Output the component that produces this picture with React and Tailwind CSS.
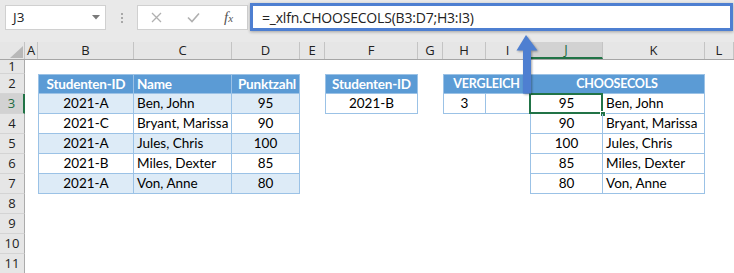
import React from 'react';

const COLS = [
  ['A', 'w-[13px]'],
  ['B', 'w-[96px]'],
  ['C', 'w-[98px]'],
  ['D', 'w-[68px]'],
  ['E', 'w-[25px]'],
  ['F', 'w-[93px]'],
  ['G', 'w-[25px]'],
  ['H', 'w-[43px]'],
  ['I', 'w-[44px]'],
  ['J', 'w-[73px]'],
  ['K', 'w-[102px]'],
  ['L', 'w-[29px]'],
];

const STUDENTS = [
  ['2021-A', 'Ben, John', '95'],
  ['2021-C', 'Bryant, Marissa', '90'],
  ['2021-A', 'Jules, Chris', '100'],
  ['2021-B', 'Miles, Dexter', '85'],
  ['2021-A', 'Von, Anne', '80'],
];

const HEAD = 'bg-[#5b9bd5] text-white font-bold border-[#9bc2e6] tracking-[-0.2px]';
const BOX = 'border-[#9bc2e6] border-r border-b';

function Cell({ w, className = '', children }) {
  return (
    <div className={`${w} shrink-0 h-full flex items-center px-[3px] whitespace-nowrap ${className}`}>
      {children}
    </div>
  );
}

function Row({ n, h = 'h-[20px]', active = false, children }) {
  return (
    <div className={`flex ${h}`}>
      <div
        className={`w-[25px] shrink-0 flex items-center justify-center border-b border-b-[#d4d4d4] text-[13px] font-['Open_Sans'] ${
          active
            ? 'bg-[#d2d2d2] text-[#1e6b41] border-r-2 border-r-[#217346]'
            : 'bg-[#e6e6e6] text-[#222] border-r border-r-[#ababab]'
        }`}
      >
        {n}
      </div>
      {children}
    </div>
  );
}

function Toolbar() {
  return (
    <div className="h-[42px] bg-[#e9e9e9] flex items-start pt-[3px] pl-[5px]">
      <div className="mt-[2px] w-[101px] h-[25px] bg-white border border-[#d0d0d0] flex items-center justify-between pl-[7px] pr-[5px] text-[13.5px] text-[#222] font-['Open_Sans']">
        <span>J3</span>
        <svg width="8" height="5" viewBox="0 0 8 5">
          <path d="M0 0h8L4 4.5z" fill="#7a7a7a" />
        </svg>
      </div>
      <div className="mt-[2px] w-[31px] h-[25px] flex flex-col items-center justify-center gap-[2px]">
        <span className="w-[2px] h-[2px] bg-[#a8a8a8]" />
        <span className="w-[2px] h-[2px] bg-[#a8a8a8]" />
        <span className="w-[2px] h-[2px] bg-[#a8a8a8]" />
      </div>
      <div className="mt-[2px] w-[111px] h-[25px] bg-white border border-[#d0d0d0] flex items-center">
        <svg className="ml-[13px]" width="11" height="11" viewBox="0 0 11 11">
          <path d="M1 1l9 9M10 1l-9 9" stroke="#b0b0b0" strokeWidth="1.3" />
        </svg>
        <svg className="ml-[25px]" width="13" height="11" viewBox="0 0 13 11">
          <path d="M1 5.5l4 4L12 1.5" stroke="#b0b0b0" strokeWidth="1.6" fill="none" />
        </svg>
        <span className="ml-[24px] italic font-['Liberation_Serif'] text-[15px] text-[#555] leading-none">
          f<span className="text-[11px]">x</span>
        </span>
      </div>
      <div className="ml-[2px] w-[483px] h-[28px] bg-white border-[3px] border-[#4e7fd1] shadow-[0_1px_3px_rgba(0,0,0,0.3)] flex items-center pl-[9px] text-[14px] text-[#222] font-['Open_Sans'] tracking-[-0.2px]">
        =_xlfn.CHOOSECOLS(B3:D7;H3:I3)
      </div>
    </div>
  );
}

function ColumnHeaders() {
  return (
    <div className="flex h-[18px] bg-[#e6e6e6] border-b border-[#a6a6a6] font-['Open_Sans'] text-[13px] text-[#222]">
      <div className="w-[25px] shrink-0 border-r border-[#c4c4c4] flex items-end justify-end pr-[1px] pb-[1px]">
        <svg width="13" height="12" viewBox="0 0 13 12">
          <path d="M13 0v12H0z" fill="#b8b8b8" />
        </svg>
      </div>
      {COLS.map(([name, w]) =>
        name === 'J' ? (
          <div
            key={name}
            className={`${w} shrink-0 flex items-center justify-center bg-[#d2d2d2] text-[#1e6b41] border-r border-[#c4c4c4] border-b-2 border-b-[#217346]`}
          >
            {name}
          </div>
        ) : (
          <div key={name} className={`${w} shrink-0 flex items-center justify-center border-r border-[#c4c4c4]`}>
            {name}
          </div>
        )
      )}
    </div>
  );
}

export default function App() {
  return (
    <div className="relative w-[734px] h-[273px] overflow-hidden bg-white font-['Lato'] text-[13.5px] text-black">
      <Toolbar />
      <ColumnHeaders />
      <Row n="1" h="h-[14px]" />
      <Row n="2">
        <Cell w="w-[13px]" />
        <Cell w="w-[96px]" className={`${HEAD} border border-r justify-center`}>Studenten-ID</Cell>
        <Cell w="w-[98px]" className={`${HEAD} border-t border-b border-r`}>Name</Cell>
        <Cell w="w-[68px]" className={`${HEAD} border-t border-b border-r justify-end`}>Punktzahl</Cell>
        <Cell w="w-[25px]" />
        <Cell w="w-[93px]" className={`${HEAD} border justify-center`}>Studenten-ID</Cell>
        <Cell w="w-[25px]" />
        <Cell w="w-[87px]" className={`${HEAD} border justify-center text-[12.5px]`}>VERGLEICH</Cell>
        <Cell w="w-[175px]" className={`${HEAD} border-t border-b border-r justify-center text-[12.5px]`}>CHOOSECOLS</Cell>
        <Cell w="w-[29px]" />
      </Row>
      {STUDENTS.map(([id, name, score], i) => {
        const band = i % 2 === 0 ? 'bg-[#ddebf7]' : 'bg-white';
        const first = i === 0;
        return (
          <Row key={id + name} n={String(i + 3)} active={first}>
            <Cell w="w-[13px]" />
            <Cell w="w-[96px]" className={`${BOX} ${band} border-l justify-center`}>{id}</Cell>
            <Cell w="w-[98px]" className={`${BOX} ${band}`}>{name}</Cell>
            <Cell w="w-[68px]" className={`${BOX} ${band} justify-center`}>{score}</Cell>
            <Cell w="w-[25px]" />
            {first ? (
              <Cell w="w-[93px]" className={`${BOX} border-l justify-center`}>2021-B</Cell>
            ) : (
              <Cell w="w-[93px]" />
            )}
            <Cell w="w-[25px]" />
            {first ? (
              <>
                <Cell w="w-[43px]" className={`${BOX} border-l justify-center`}>3</Cell>
                <Cell w="w-[44px]" className={BOX} />
              </>
            ) : (
              <Cell w="w-[87px]" />
            )}
            <div className={`relative w-[73px] shrink-0 h-full flex items-center justify-center ${BOX} border-l`}>
              {score}
              {first && (
                <>
                  <div className="absolute -left-[2px] -top-[1px] -right-[1px] -bottom-[1px] border-2 border-[#217346]" />
                  <div className="absolute -right-[4px] -bottom-[4px] w-[6px] h-[6px] bg-[#217346] border border-white" />
                </>
              )}
            </div>
            <Cell w="w-[102px]" className={BOX}>{name}</Cell>
            <Cell w="w-[29px]" />
          </Row>
        );
      })}
      <Row n="8" />
      <Row n="9" />
      <Row n="10" />
      <Row n="11" />
      <svg
        className="absolute left-[512px] top-[32px] drop-shadow-[1px_1px_1px_rgba(0,0,0,0.35)]"
        width="30"
        height="64"
        viewBox="0 0 30 64"
      >
        <path d="M14 3L4.5 18.5H11V61.5H19V18.5H25.5Z" fill="#4e7fd1" />
      </svg>
    </div>
  );
}
